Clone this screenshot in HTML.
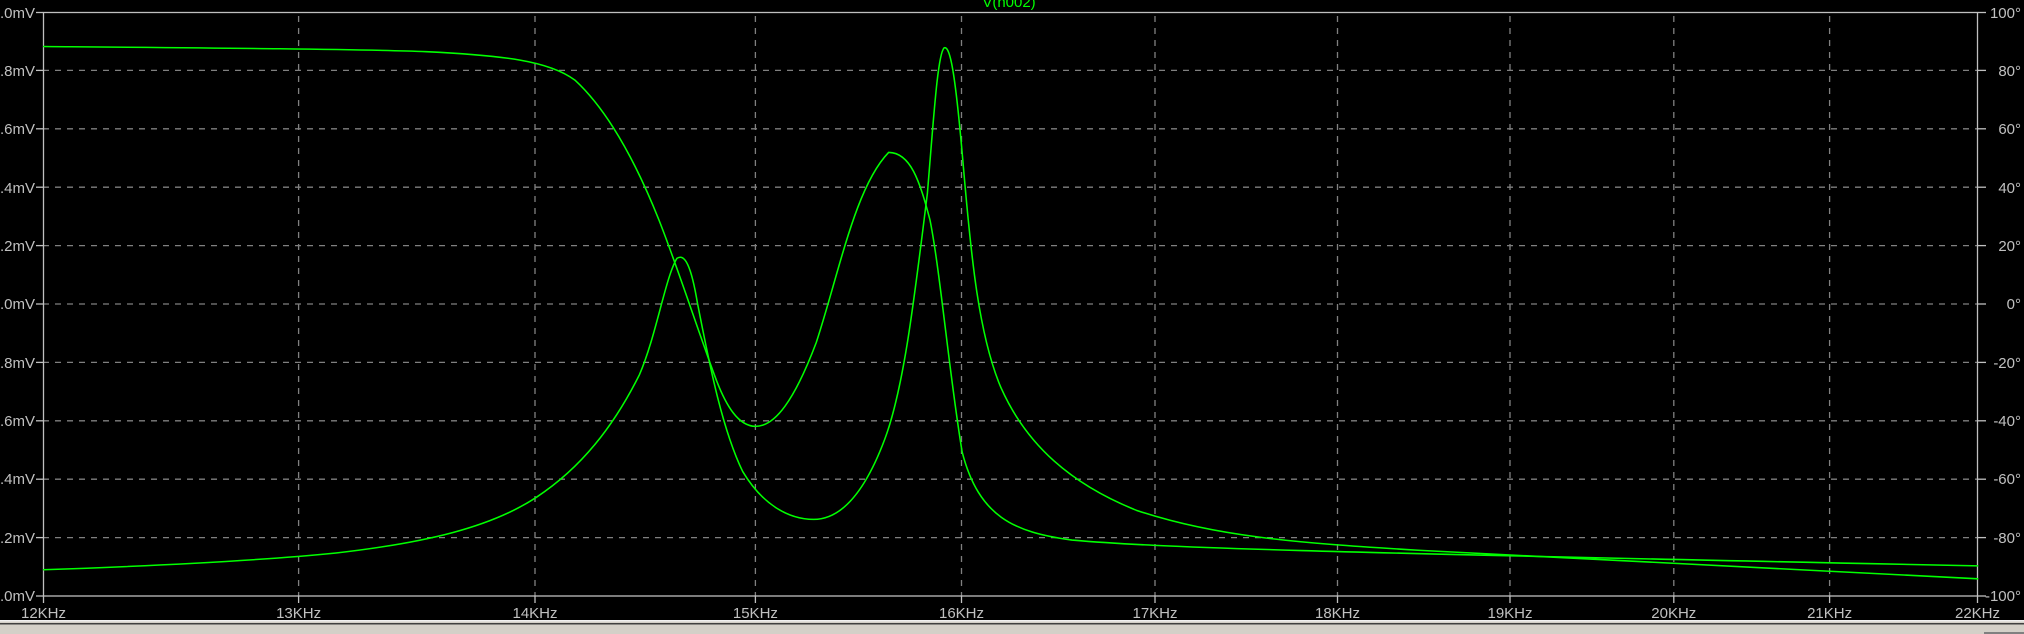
<!DOCTYPE html>
<html><head><meta charset="utf-8"><style>
html,body{margin:0;padding:0;background:#000;overflow:hidden;width:2024px;height:634px}
svg{display:block}
text{font-family:"Liberation Sans","DejaVu Sans",sans-serif;font-size:15px;fill:#c0c0c0}
</style></head><body>
<svg width="2024" height="634" viewBox="0 0 2024 634">
<rect width="2024" height="634" fill="#000"/>
<g stroke="#808080" stroke-width="1.3" stroke-dasharray="6,6">
<line x1="43" y1="70.4" x2="1978" y2="70.4"/><line x1="43" y1="128.8" x2="1978" y2="128.8"/>
<line x1="43" y1="187.2" x2="1978" y2="187.2"/><line x1="43" y1="245.6" x2="1978" y2="245.6"/>
<line x1="43" y1="304" x2="1978" y2="304"/><line x1="43" y1="362.4" x2="1978" y2="362.4"/>
<line x1="43" y1="420.8" x2="1978" y2="420.8"/><line x1="43" y1="479.2" x2="1978" y2="479.2"/>
<line x1="43" y1="537.6" x2="1978" y2="537.6"/>
<line x1="298.6" y1="16" x2="298.6" y2="596"/><line x1="535" y1="16" x2="535" y2="596"/>
<line x1="755.4" y1="16" x2="755.4" y2="596"/><line x1="961.5" y1="16" x2="961.5" y2="596"/>
<line x1="1155" y1="16" x2="1155" y2="596"/><line x1="1337.5" y1="16" x2="1337.5" y2="596"/>
<line x1="1510" y1="16" x2="1510" y2="596"/><line x1="1673.8" y1="16" x2="1673.8" y2="596"/>
<line x1="1829.6" y1="16" x2="1829.6" y2="596"/>
</g>
<g stroke="#c0c0c0" stroke-width="1.3" fill="none">
<rect x="43.5" y="12.5" width="1934" height="583.5"/>
<line x1="36" y1="12.5" x2="43" y2="12.5"/><line x1="36" y1="70.4" x2="43" y2="70.4"/><line x1="36" y1="128.8" x2="43" y2="128.8"/><line x1="36" y1="187.2" x2="43" y2="187.2"/><line x1="36" y1="245.6" x2="43" y2="245.6"/><line x1="36" y1="304" x2="43" y2="304"/><line x1="36" y1="362.4" x2="43" y2="362.4"/><line x1="36" y1="420.8" x2="43" y2="420.8"/><line x1="36" y1="479.2" x2="43" y2="479.2"/><line x1="36" y1="537.6" x2="43" y2="537.6"/><line x1="36" y1="596" x2="43" y2="596"/>
<line x1="1978" y1="12.5" x2="1986" y2="12.5"/><line x1="1978" y1="70.4" x2="1986" y2="70.4"/><line x1="1978" y1="128.8" x2="1986" y2="128.8"/><line x1="1978" y1="187.2" x2="1986" y2="187.2"/><line x1="1978" y1="245.6" x2="1986" y2="245.6"/><line x1="1978" y1="304" x2="1986" y2="304"/><line x1="1978" y1="362.4" x2="1986" y2="362.4"/><line x1="1978" y1="420.8" x2="1986" y2="420.8"/><line x1="1978" y1="479.2" x2="1986" y2="479.2"/><line x1="1978" y1="537.6" x2="1986" y2="537.6"/><line x1="1978" y1="596" x2="1986" y2="596"/>
<line x1="43.5" y1="596" x2="43.5" y2="603"/><line x1="298.6" y1="596" x2="298.6" y2="603"/><line x1="535" y1="596" x2="535" y2="603"/><line x1="755.4" y1="596" x2="755.4" y2="603"/><line x1="961.5" y1="596" x2="961.5" y2="603"/><line x1="1155" y1="596" x2="1155" y2="603"/><line x1="1337.5" y1="596" x2="1337.5" y2="603"/><line x1="1510" y1="596" x2="1510" y2="603"/><line x1="1673.8" y1="596" x2="1673.8" y2="603"/><line x1="1829.6" y1="596" x2="1829.6" y2="603"/><line x1="1977.5" y1="596" x2="1977.5" y2="603"/>
</g>
<g text-anchor="end">
<text x="35" y="18">2.0mV</text><text x="35" y="76">1.8mV</text><text x="35" y="134">1.6mV</text><text x="35" y="193">1.4mV</text><text x="35" y="251">1.2mV</text><text x="35" y="309">1.0mV</text><text x="35" y="368">0.8mV</text><text x="35" y="426">0.6mV</text><text x="35" y="484">0.4mV</text><text x="35" y="543">0.2mV</text><text x="35" y="601">0.0mV</text>
<text x="2021" y="18">100°</text><text x="2021" y="76">80°</text><text x="2021" y="134">60°</text><text x="2021" y="193">40°</text><text x="2021" y="251">20°</text><text x="2021" y="309">0°</text><text x="2021" y="368">-20°</text><text x="2021" y="426">-40°</text><text x="2021" y="484">-60°</text><text x="2021" y="543">-80°</text><text x="2021" y="601">-100°</text>
</g>
<g text-anchor="middle">
<text x="43.5" y="618">12KHz</text><text x="298.6" y="618">13KHz</text><text x="535" y="618">14KHz</text><text x="755.4" y="618">15KHz</text><text x="961.5" y="618">16KHz</text><text x="1155" y="618">17KHz</text><text x="1337.5" y="618">18KHz</text><text x="1510" y="618">19KHz</text><text x="1673.8" y="618">20KHz</text><text x="1829.6" y="618">21KHz</text><text x="1977.5" y="618">22KHz</text>
<text x="1009" y="7" style="fill:#00ff00">V(n002)</text>
</g>
<g transform="translate(0.4,0) scale(1.291,1.292)" fill="none" stroke="#00ff00" stroke-width="1.2">
<path d="M33,441 C120,438 200,434 260,428 C330,420 380,408 415,385 C450,362 475,330 495,290 C508,260 515,215 524,200 C530,196 535,205 540,235 C548,275 558,330 575,365 C590,390 610,402 630,402 C652,402 670,380 685,340 C700,300 708,230 718,150 C723,90 726,42 731,37 C736,35 740,60 746,130 C752,200 758,260 775,300 C795,345 830,375 880,395 C940,415 1000,420 1100,426 C1250,435 1400,440 1532,448"/>
<path d="M33,36 C150,37 280,38 330,40 C390,43 425,47 445,62 C470,85 492,125 510,170 C525,208 540,255 553,290 C562,315 572,330 585,330 C600,330 615,310 632,265 C650,210 662,145 688,118 C705,118 712,140 720,170 C728,210 735,290 745,350 C758,400 785,412 830,418 C900,424 1000,427 1532,438"/>
</g>
<rect x="0" y="620" width="2024" height="14" fill="#d4d0c8"/>
<rect x="0" y="620" width="2024" height="1.5" fill="#f0f0f0"/>
<rect x="0" y="623" width="2024" height="1.5" fill="#404040"/>
<rect x="0" y="625" width="2024" height="9" fill="#d4d0c8"/>
<rect x="1984" y="632" width="40" height="2" fill="#808080"/>
</svg>
</body></html>
